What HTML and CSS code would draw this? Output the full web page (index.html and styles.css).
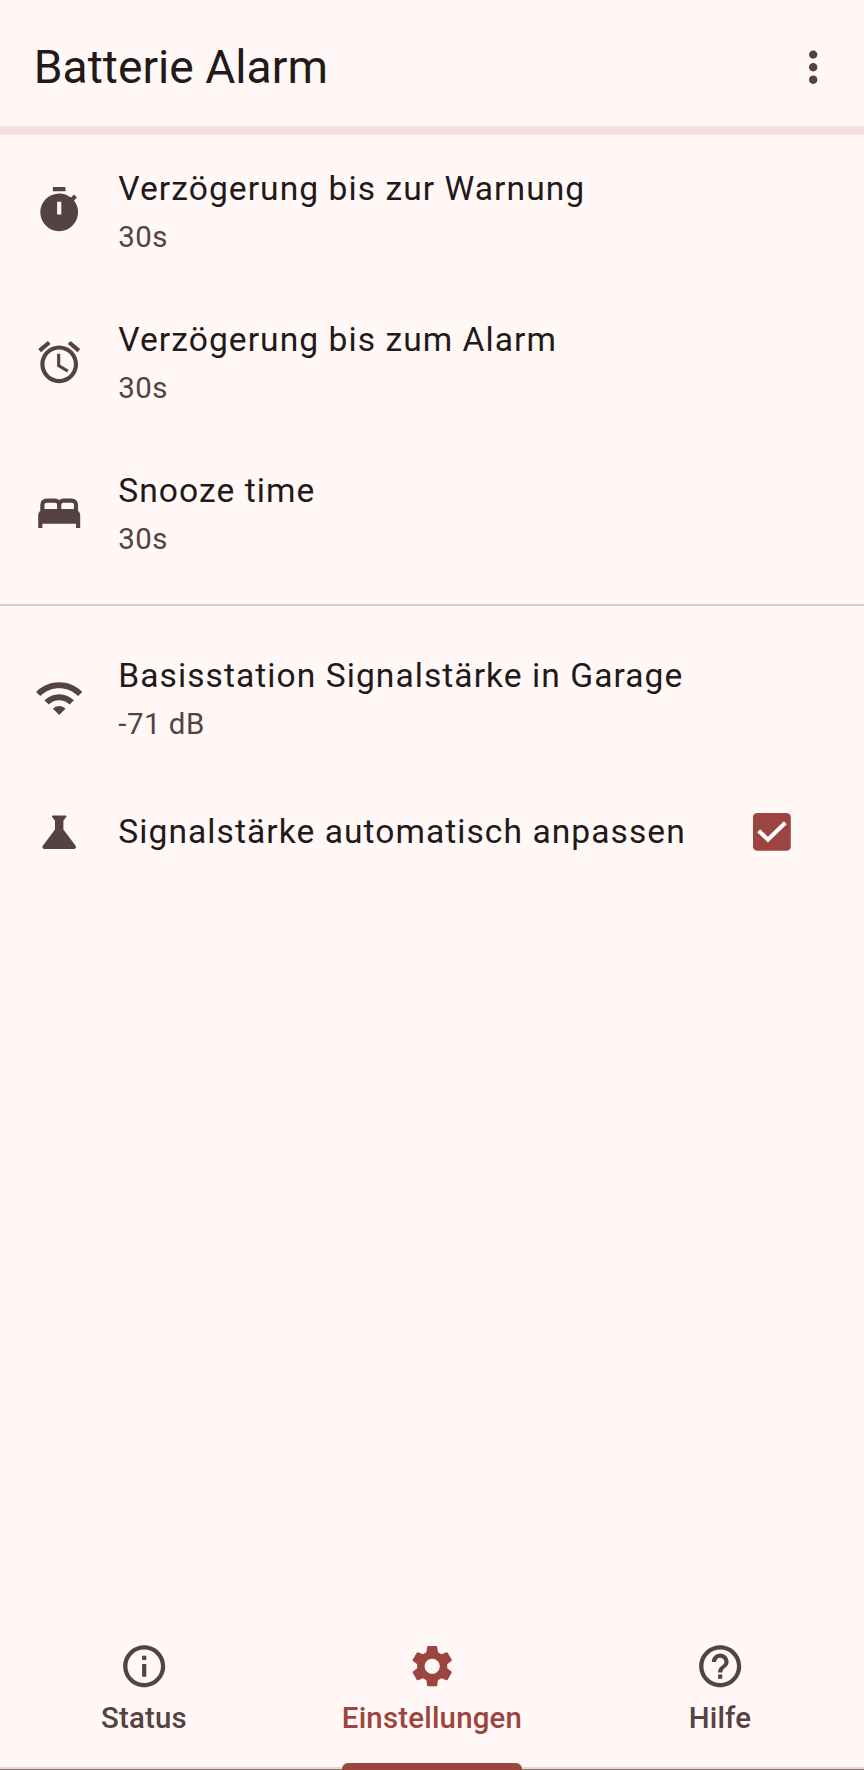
FILE: index.html
```html
<!DOCTYPE html>
<html lang="de">
<head>
<meta charset="utf-8">
<title>Batterie Alarm</title>
<link rel="stylesheet" href="styles.css">
</head>
<body>
<div class="app">
  <header class="topbar">
    <h1 class="topbar-title">Batterie Alarm</h1>
    <svg class="icon" viewBox="0 0 24 24"><path d="M12 8c1.1 0 2-.9 2-2s-.9-2-2-2-2 .9-2 2 .9 2 2 2zm0 2c-1.1 0-2 .9-2 2s.9 2 2 2 2-.9 2-2-.9-2-2-2zm0 6c-1.1 0-2 .9-2 2s.9 2 2 2 2-.9 2-2-.9-2-2-2z"/></svg>
  </header>
  <div class="progress"></div>
  <main class="content">
    <section class="group">
      <div class="row">
        <svg class="icon" viewBox="0 0 24 24"><path d="M9 1h6v2H9zM19.03 7.39l1.42-1.42c-.43-.51-.9-.99-1.41-1.41l-1.42 1.42C16.07 4.74 14.12 4 12 4c-4.97 0-9 4.03-9 9s4.02 9 9 9 9-4.03 9-9c0-2.12-.74-4.07-1.97-5.61zM13 14h-2V8h2v6z"/></svg>
        <div class="row-text"><div class="row-title">Verzögerung bis zur Warnung</div><div class="row-value">30s</div></div>
      </div>
      <div class="row">
        <svg class="icon" viewBox="0 0 24 24"><path d="M22 5.72l-4.6-3.86-1.29 1.53 4.6 3.86L22 5.72zM7.88 3.39L6.6 1.86 2 5.71l1.29 1.53 4.59-3.85zM12.5 8H11v6l4.75 2.85.75-1.23-4-2.37V8zM12 4c-4.97 0-9 4.03-9 9s4.02 9 9 9c4.97 0 9-4.03 9-9s-4.03-9-9-9zm0 16c-3.87 0-7-3.13-7-7s3.13-7 7-7 7 3.13 7 7-3.13 7-7 7z"/></svg>
        <div class="row-text"><div class="row-title">Verzögerung bis zum Alarm</div><div class="row-value">30s</div></div>
      </div>
      <div class="row">
        <svg class="icon" viewBox="0 0 24 24"><path d="M2 19v-6q0-.675.275-1.225T3 10.8V8q0-1.25.875-2.125T6 5h4q.575 0 1.075.213T12 5.8q.425-.375.925-.587T14 5h4q1.25 0 2.125.875T21 8v2.8q.45.425.725.975T22 13v6h-2v-2H4v2zm11-9h6V8q0-.425-.288-.712T18 7h-4q-.425 0-.712.288T13 8zm-8 0h6V8q0-.425-.288-.712T10 7H6q-.425 0-.712.288T5 8z"/></svg>
        <div class="row-text"><div class="row-title">Snooze time</div><div class="row-value">30s</div></div>
      </div>
    </section>
    <div class="divider"></div>
    <section class="group">
      <div class="row">
        <svg class="icon" viewBox="0 0 24 24"><path d="M1 9l2 2c4.97-4.97 13.03-4.97 18 0l2-2C16.93 2.93 7.08 2.93 1 9zm8 8l3 3 3-3c-1.65-1.66-4.34-1.66-6 0zm-4-4l2 2c2.76-2.76 7.24-2.76 10 0l2-2C15.14 9.14 8.87 9.14 5 13z"/></svg>
        <div class="row-text"><div class="row-title">Basisstation Signalstärke in Garage</div><div class="row-value">-71 dB</div></div>
      </div>
      <div class="row row-single">
        <svg class="icon" viewBox="0 0 24 24"><path d="M19.8 18.4L14 10.67V6.5l1.35-1.69c.26-.33.03-.81-.39-.81H9.04c-.42 0-.65.48-.39.81L10 6.5v4.17L4.2 18.4c-.49.66-.02 1.6.8 1.6h14c.82 0 1.29-.94.8-1.6z"/></svg>
        <div class="row-text"><div class="row-title">Signalstärke automatisch anpassen</div></div>
        <svg class="checkbox" viewBox="0 0 18 18"><rect class="checkbox-box" width="18" height="18" rx="2"/><path class="checkbox-mark" d="M2.7 8.4l4.4 4.3 8.3-8.1"/></svg>
      </div>
    </section>
  </main>
  <nav class="tabs">
    <div class="tab">
      <svg class="icon" viewBox="0 0 24 24"><path d="M11 7h2v2h-2zm0 4h2v6h-2zm1-9C6.48 2 2 6.48 2 12s4.48 10 10 10 10-4.48 10-10S17.52 2 12 2zm0 18c-4.41 0-8-3.59-8-8s3.59-8 8-8 8 3.59 8 8-3.59 8-8 8z"/></svg>
      <span class="tab-label">Status</span>
    </div>
    <div class="tab tab-active">
      <svg class="icon" viewBox="0 0 24 24"><path d="M19.14 12.94c.04-.3.06-.61.06-.94 0-.32-.02-.64-.07-.94l2.03-1.58c.18-.14.23-.41.12-.61l-1.92-3.32c-.12-.22-.37-.29-.59-.22l-2.39.96c-.5-.38-1.03-.7-1.62-.94L14.4 2.81c-.04-.24-.24-.41-.48-.41h-3.84c-.24 0-.43.17-.47.41L9.25 5.35C8.66 5.59 8.12 5.92 7.63 6.29L5.24 5.33c-.22-.08-.47 0-.59.22L2.74 8.87c-.12.21-.08.47.12.61l2.03 1.58c-.05.3-.09.63-.09.94s.02.64.07.94l-2.03 1.58c-.18.14-.23.41-.12.61l1.92 3.32c.12.22.37.29.59.22l2.39-.96c.5.38 1.03.7 1.62.94l.36 2.54c.05.24.24.41.48.41h3.84c.24 0 .44-.17.47-.41l.36-2.54c.59-.24 1.13-.56 1.62-.94l2.39.96c.22.08.47 0 .59-.22l1.92-3.32c.12-.22.07-.47-.12-.61l-2.01-1.58zM12 15.6c-1.98 0-3.6-1.62-3.6-3.6s1.62-3.6 3.6-3.6 3.6 1.62 3.6 3.6-1.62 3.6-3.6 3.6z"/></svg>
      <span class="tab-label">Einstellungen</span>
      <span class="indicator"></span>
    </div>
    <div class="tab">
      <svg class="icon" viewBox="0 0 24 24"><path d="M11 18h2v-2h-2v2zm1-16C6.48 2 2 6.48 2 12s4.48 10 10 10 10-4.48 10-10S17.52 2 12 2zm0 18c-4.41 0-8-3.59-8-8s3.59-8 8-8 8 3.59 8 8-3.59 8-8 8zm0-14c-2.21 0-4 1.79-4 4h2c0-1.1.9-2 2-2s2 .9 2 2c0 2-3 1.75-3 5h2c0-2.25 3-2.5 3-5 0-2.21-1.79-4-4-4z"/></svg>
      <span class="tab-label">Hilfe</span>
    </div>
  </nav>
</div>
</body>
</html>
```
FILE: styles.css
```css
* { box-sizing: border-box; }
body {
  margin: 0;
  background: #fff8f6;
  color: #231919;
  font-family: Roboto, sans-serif;
}
.app {
  height: 1770px;
  display: flex;
  flex-direction: column;
  overflow: hidden;
}
.topbar {
  height: 126px;
  padding: 8px 25.6px 0 33.8px;
  display: flex;
  align-items: center;
  justify-content: space-between;
}
.topbar-title {
  margin: 0;
  font-size: 46.2px;
  font-weight: 400;
  line-height: 58px;
}
.icon {
  width: 50.4px;
  height: 50.4px;
  flex: none;
  fill: #554243;
}
.progress {
  height: 9px;
  background: #f5dddd;
  border: solid #f8e3e2;
  border-width: 1px 0;
}
.content { flex: 1; }
.row {
  height: 151.2px;
  padding: 0 16.8px 0 33.6px;
  display: flex;
  align-items: center;
  gap: 34.3px;
}
.row-single { height: 117.6px; padding-right: 73.5px; }
.row-text { flex: 1; }
.row-title {
  font-size: 33.6px;
  line-height: 50px;
  letter-spacing: 1.05px;
  white-space: nowrap;
}
.row-value {
  padding-top: 2px;
  margin-bottom: -1px;
  font-size: 29.4px;
  line-height: 42px;
  letter-spacing: 0.525px;
  color: #554243;
}
.divider {
  height: 2px;
  margin: 15.8px 0;
  background: #dfc9c6;
}
.checkbox { width: 37.8px; height: 37.8px; flex: none; }
.checkbox-box { fill: #9c4540; }
.checkbox-mark { fill: none; stroke: #fff; stroke-width: 2; }
.tabs {
  height: 151px;
  display: flex;
  border-bottom: 1px solid #8a7674;
  box-shadow: inset 0 -2px #ead6d4;
}
.tab {
  flex: 1;
  position: relative;
  display: flex;
  flex-direction: column;
  align-items: center;
  padding-top: 22px;
  color: #554243;
}
.tab-label {
  margin-top: 5.5px;
  font-size: 29.4px;
  font-weight: 500;
  line-height: 42px;
  letter-spacing: 0.21px;
}
.tab-active { color: #9c4540; }
.tab-active .icon { fill: #9c4540; }
.indicator {
  position: absolute;
  bottom: -1px;
  width: 180px;
  height: 7px;
  border-radius: 6px 6px 0 0;
  background: #9c4540;
}
```
